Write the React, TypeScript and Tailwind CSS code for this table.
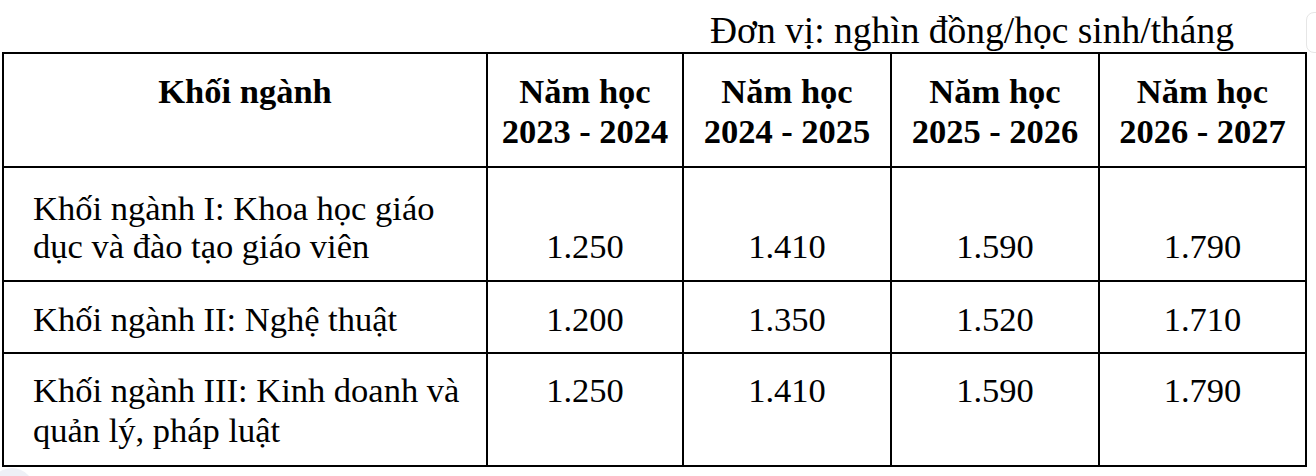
import React from "react";

const serif = { fontFamily: '"Liberation Serif", "Times New Roman", serif' };

type Row = {
  label: string[];
  values: string[];
  h: string;
  labelPt: string;
  numPt: string;
  leading: string;
};

const rows: Row[] = [
  {
    label: ["Khối ngành I: Khoa học giáo", "dục và đào tạo giáo viên"],
    values: ["1.250", "1.410", "1.590", "1.790"],
    h: "h-[114px]",
    labelPt: "pt-[21px]",
    numPt: "pt-[59px]",
    leading: "leading-[38px]",
  },
  {
    label: ["Khối ngành II: Nghệ thuật"],
    values: ["1.200", "1.350", "1.520", "1.710"],
    h: "h-[72px]",
    labelPt: "pt-[17px]",
    numPt: "pt-[17px]",
    leading: "leading-[40px]",
  },
  {
    label: ["Khối ngành III: Kinh doanh và", "quản lý, pháp luật"],
    values: ["1.250", "1.410", "1.590", "1.790"],
    h: "h-[113px]",
    labelPt: "pt-[16px]",
    numPt: "pt-[16px]",
    leading: "leading-[40px]",
  },
];

const years = ["2023 - 2024", "2024 - 2025", "2025 - 2026", "2026 - 2027"];

export default function App() {
  return (
    <div
      className="relative w-[1316px] h-[476px] overflow-hidden bg-white text-black"
      style={serif}
    >
      <div className="pointer-events-none absolute left-[1306px] top-[12px] h-[41px] w-[30px] rounded-lg border border-[#e6e6e6]" />
      <div className="pointer-events-none absolute left-[-10px] top-[468px] h-[44px] w-[44px] rounded-full bg-[#eef0f6]" />

      <div className="w-[1307px]">
        <div className="flex h-[52px] justify-end pr-[73px]">
          <div className="pt-[12px] text-[37.5px] leading-[37px] whitespace-nowrap">
            Đơn vị: nghìn đồng/học sinh/tháng
          </div>
        </div>

        <div className="ml-[2px] grid w-[1305px] grid-cols-[484px_196px_208px_208px_207px] border-l-2 border-t-2 border-black text-[34.5px]">
          {/* Header */}
          <div className="h-[114px] border-b-2 border-r-2 border-black pt-[17px] text-center font-bold leading-[40px] whitespace-nowrap">
            Khối ngành
          </div>
          {years.map((y) => (
            <div
              key={y}
              className="h-[114px] border-b-2 border-r-2 border-black pt-[17px] text-center font-bold leading-[40px] whitespace-nowrap"
            >
              <div>Năm học</div>
              <div>{y}</div>
            </div>
          ))}

          {rows.map((r, i) => (
            <React.Fragment key={i}>
              <div
                className={`${r.h} ${r.labelPt} ${r.leading} border-b-2 border-r-2 border-black pl-[29px] whitespace-nowrap`}
              >
                {r.label.map((l) => (
                  <div key={l}>{l}</div>
                ))}
              </div>
              {r.values.map((v, j) => (
                <div
                  key={j}
                  className={`${r.h} ${r.numPt} ${r.leading} border-b-2 border-r-2 border-black text-center whitespace-nowrap`}
                >
                  {v}
                </div>
              ))}
            </React.Fragment>
          ))}
        </div>
      </div>
    </div>
  );
}
